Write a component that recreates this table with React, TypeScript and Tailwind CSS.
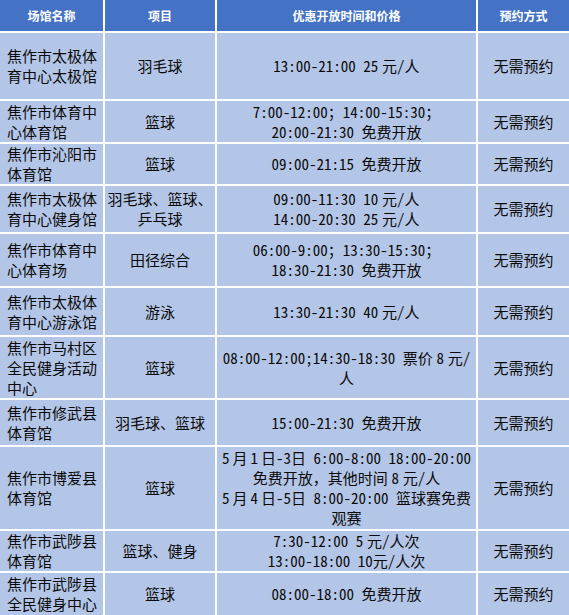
import React from "react";

type Row = { name: string[]; item: string[]; time: string[]; way: string };

const S = "\u2005";
const T = "\u2009";

const rows: Row[] = [
  { name: ["焦作市太极体", "育中心太极馆"], item: ["羽毛球"], time: [`13:00-21:00 25${S}元/人`], way: "无需预约" },
  { name: ["焦作市体育中", "心体育馆"], item: ["篮球"], time: ["7:00-12:00；14:00-15:30；", "20:00-21:30 免费开放"], way: "无需预约" },
  { name: ["焦作市沁阳市", "体育馆"], item: ["篮球"], time: ["09:00-21:15 免费开放"], way: "无需预约" },
  { name: ["焦作市太极体", "育中心健身馆"], item: ["羽毛球、篮球、", "乒乓球"], time: [`09:00-11:30 10${S}元/人`, `14:00-20:30 25${S}元/人`], way: "无需预约" },
  { name: ["焦作市体育中", "心体育场"], item: ["田径综合"], time: ["06:00-9:00；13:30-15:30；", "18:30-21:30 免费开放"], way: "无需预约" },
  { name: ["焦作市太极体", "育中心游泳馆"], item: ["游泳"], time: [`13:30-21:30 40${S}元/人`], way: "无需预约" },
  { name: ["焦作市马村区", "全民健身活动", "中心"], item: ["篮球"], time: [`08:00-12:00;14:30-18:30 票价${S}8${S}元/`, "人"], way: "无需预约" },
  { name: ["焦作市修武县", "体育馆"], item: ["羽毛球、篮球"], time: ["15:00-21:30 免费开放"], way: "无需预约" },
  { name: ["焦作市博爱县", "体育馆"], item: ["篮球"], time: [`5${T}月${T}1${T}日-3日 6:00-8:00 18:00-20:00`, `免费开放，其他时间${S}8${S}元/人`, `5${T}月${T}4${T}日-5日 8:00-20:00 篮球赛免费`, "观赛"], way: "无需预约" },
  { name: ["焦作市武陟县", "体育馆"], item: ["篮球、健身"], time: [`7:30-12:00 5${S}元/人次`, "13:00-18:00 10元/人次"], way: "无需预约" },
  { name: ["焦作市武陟县", "全民健身中心"], item: ["篮球"], time: ["08:00-18:00 免费开放"], way: "无需预约" },
];

const font = {
  fontFamily: '"Noto Sans Mono CJK SC", "Noto Sans CJK SC", sans-serif',
};

function Lines({ lines }: { lines: string[] }) {
  return (
    <div>
      {lines.map((l, i) => (
        <div key={i} className="whitespace-pre">
          {l}
        </div>
      ))}
    </div>
  );
}

export default function App() {
  return (
    <div
      className="w-[569px] h-[615px] overflow-hidden bg-white grid grid-cols-[103px_110px_259px_91px] grid-rows-[31px_66px_41px_40px_46px_52px_47px_61px_45px_82px_40px_42px] gap-[2px] text-[15px] leading-[20px] text-[#0a0a0a]"
      style={font}
    >
      {["场馆名称", "项目", "优惠开放时间和价格", "预约方式"].map((t) => (
        <div
          key={t}
          className="bg-[#4472c4] text-white font-bold text-[12px] flex items-center justify-center"
          style={{ fontFamily: '"Noto Sans CJK SC", sans-serif' }}
        >
          {t}
        </div>
      ))}
      {rows.map((r, i) => (
        <React.Fragment key={i}>
          <div className="bg-[#b4c6e7] flex items-center pl-[7px]">
            <Lines lines={r.name} />
          </div>
          <div className="bg-[#b4c6e7] flex items-center justify-center text-center">
            <Lines lines={r.item} />
          </div>
          <div className="bg-[#b4c6e7] flex items-center justify-center text-center">
            <Lines lines={r.time} />
          </div>
          <div className="bg-[#b4c6e7] flex items-center justify-center text-center">
            {r.way}
          </div>
        </React.Fragment>
      ))}
    </div>
  );
}
